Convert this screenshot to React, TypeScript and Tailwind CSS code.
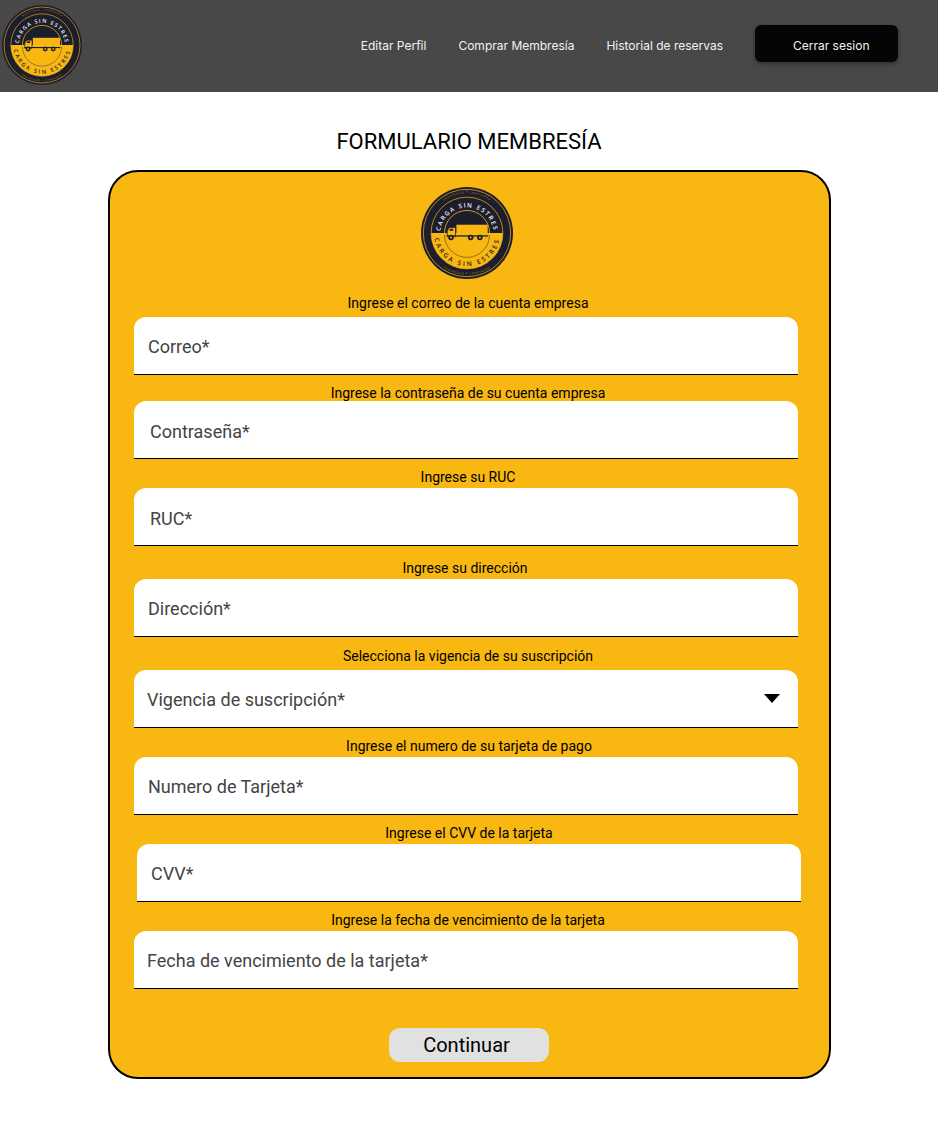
const NAV_LINKS = ['Editar Perfil', 'Comprar Membresía', 'Historial de reservas'];

const FIELDS = [
  { label: 'Ingrese el correo de la cuenta empresa', placeholder: 'Correo*', wrap: 'mt-[16px]', gap: 'mb-[6px] ml-[2px]', input: 'ml-0 pt-[2px] pl-[14px]' },
  { label: 'Ingrese la contraseña de su cuenta empresa', placeholder: 'Contraseña*', wrap: 'mt-[10px]', gap: 'mb-0 ml-[2px]', input: 'ml-0 pt-[4px] pl-[16px]' },
  { label: 'Ingrese su RUC', placeholder: 'RUC*', wrap: 'mt-[10px]', gap: 'mb-[3px] ml-[2px]', input: 'ml-0 pt-[4px] pl-[16px]' },
  { label: 'Ingrese su dirección', placeholder: 'Dirección*', wrap: 'mt-[14px]', gap: 'mb-[3px] -ml-[1px]', input: 'ml-0 pt-[2px] pl-[14px]' },
  { label: 'Selecciona la vigencia de su suscripción', placeholder: 'Vigencia de suscripción*', wrap: 'mt-[11px]', gap: 'mb-[6px] ml-[2px]', input: 'ml-0 pt-[2px] pl-[13px]', select: true },
  { label: 'Ingrese el numero de su tarjeta de pago', placeholder: 'Numero de Tarjeta*', wrap: 'mt-[10px]', gap: 'mb-[3px] ml-[3px]', input: 'ml-0 pt-[2px] pl-[14px]' },
  { label: 'Ingrese el CVV de la tarjeta', placeholder: 'CVV*', wrap: 'mt-[10px]', gap: 'mb-[3px] ml-[3px]', input: 'ml-[3px] pt-[2px] pl-[14px]' },
  { label: 'Ingrese la fecha de vencimiento de la tarjeta', placeholder: 'Fecha de vencimiento de la tarjeta*', wrap: 'mt-[10px]', gap: 'mb-[3px] ml-[2px]', input: 'ml-0 pt-[2px] pl-[13px]' },
];

function Logo({ id, className }: { id: string; className: string }) {
  const dark = '#1c1d2d';
  const gold = '#f8b711';
  return (
    <svg viewBox="0 0 100 100" className={className}>
      <defs>
        <path id={`${id}-top`} d="M 21.4 56 A 29 29 0 1 1 78.6 56" />
        <path id={`${id}-bottom`} d="M 14 50 A 36 36 0 0 0 86 50" />
        <path id={`${id}-ringtop`} d="M 7 50 A 43 43 0 0 1 93 50" />
        <path id={`${id}-ringbottom`} d="M 4.5 50 A 45.5 45.5 0 0 0 95.5 50" />
      </defs>
      <circle cx="50" cy="50" r="50" fill={dark} />
      <circle cx="50" cy="50" r="47.5" fill="none" stroke="#d9a012" strokeWidth="0.9" />
      <circle cx="50" cy="50" r="39" fill="none" stroke="#d9a012" strokeWidth="0.9" />
      <path d="M 11 50 A 39 39 0 0 0 89 50 Z" fill={gold} />
      <path d="M 25.5 50 A 24.5 24.5 0 0 1 74.5 50" fill="none" stroke={gold} strokeWidth="0.9" />
      <path d="M 25.5 52 A 24.5 24.5 0 0 0 74.5 52" fill="none" stroke={dark} strokeWidth="0.5" />
      <text fontFamily="'Open Sans', sans-serif" fontSize="3" letterSpacing="0.8" fill="#c8920f" textAnchor="middle">
        <textPath href={`#${id}-ringtop`} startOffset="50%">SEGURIDAD Y CONFIANZA</textPath>
      </text>
      <text fontFamily="'Open Sans', sans-serif" fontSize="3" letterSpacing="0.8" fill="#c8920f" textAnchor="middle">
        <textPath href={`#${id}-ringbottom`} startOffset="50%">SEGURIDAD Y CONFIANZA</textPath>
      </text>
      <text fontFamily="'Open Sans', sans-serif" fontSize="6.8" fontWeight="600" letterSpacing="1.5" fill="#f4f4f4" textAnchor="middle">
        <textPath href={`#${id}-top`} startOffset="50%">CARGA SIN ESTRES</textPath>
      </text>
      <text fontFamily="'Open Sans', sans-serif" fontSize="7" fontWeight="600" letterSpacing="2.4" fill={dark} textAnchor="middle">
        <textPath href={`#${id}-bottom`} startOffset="50%">CARGA SIN ESTRES</textPath>
      </text>
      {/* truck */}
      <rect x="38.5" y="41" width="34" height="11.5" fill={gold} />
      <path d="M 28.5 54 V 47.5 L 31 44 H 37.5 V 54 Z" fill={gold} stroke={dark} strokeWidth="0.8" />
      <path d="M 30.5 47.5 L 32 45.3 H 35 V 47.5 Z" fill={dark} />
      <rect x="28" y="52.5" width="45" height="1.4" fill={dark} />
      {[32.6, 54, 64].map((cx) => (
        <g key={cx}>
          <circle cx={cx} cy="55" r="3" fill={dark} />
          <circle cx={cx} cy="55" r="1.1" fill={gold} />
        </g>
      ))}
    </svg>
  );
}

export default function App() {
  return (
    <div className="min-h-[1137px] bg-white font-['Roboto',sans-serif]">
      {/* Top bar */}
      <header className="flex h-[92px] items-center justify-between bg-[#484848] pl-[2px] pr-[40px]">
        <Logo id="nav" className="mb-[2px] h-[80px] w-[80px]" />
        <nav className="flex items-center gap-[32px] font-['Inter',sans-serif] text-[12px] text-[#f2f2f2]">
          {NAV_LINKS.map((link) => (
            <a key={link} href="#">{link}</a>
          ))}
          <button className="mb-[6px] h-[37px] w-[143px] rounded-[6px] bg-[#050505] pt-[5px] pl-[38px] text-left shadow-[0_2px_4px_rgba(0,0,0,0.35)]">
            Cerrar sesion
          </button>
        </nav>
      </header>

      <main className="flex flex-col items-center pt-[37px]">
        <h1 className="text-[22px] leading-[26px] text-black">FORMULARIO MEMBRESÍA</h1>

        {/* Form card */}
        <form className="mt-[15px] ml-[1px] flex h-[909px] w-[723px] flex-col rounded-[30px] border-2 border-black bg-[#f8b711] pt-[15px] pl-[24px]">
          <Logo id="form" className="ml-[287px] h-[92px] w-[92px] shrink-0" />

          {FIELDS.map((field) => (
            <div key={field.label} className={field.wrap}>
              <p className={`w-[664px] pt-[1px] text-center text-[14px] leading-[15px] text-black ${field.gap}`}>{field.label}</p>
              {field.select ? (
                <div className={`flex h-[58px] w-[664px] items-center justify-between rounded-t-[12px] border-b border-black bg-white pr-[18px] text-[18px] text-[#444444] ${field.input}`}>
                  <span>{field.placeholder}</span>
                  <svg viewBox="0 0 16 9" className="mb-[2px] h-[9px] w-[16px]"><path d="M0 0H16L8 9Z" fill="#000" /></svg>
                </div>
              ) : (
                <input
                  placeholder={field.placeholder}
                  className={`block h-[58px] w-[664px] rounded-t-[12px] border-b border-black bg-white text-[18px] outline-none placeholder:text-[#444444] ${field.input}`}
                />
              )}
            </div>
          ))}

          <button type="button" className="mt-[39px] ml-[255px] h-[34px] w-[160px] rounded-[11px] bg-[#e1e1e1] pr-[5px] text-[20px] text-black">
            Continuar
          </button>
        </form>
      </main>
    </div>
  );
}
